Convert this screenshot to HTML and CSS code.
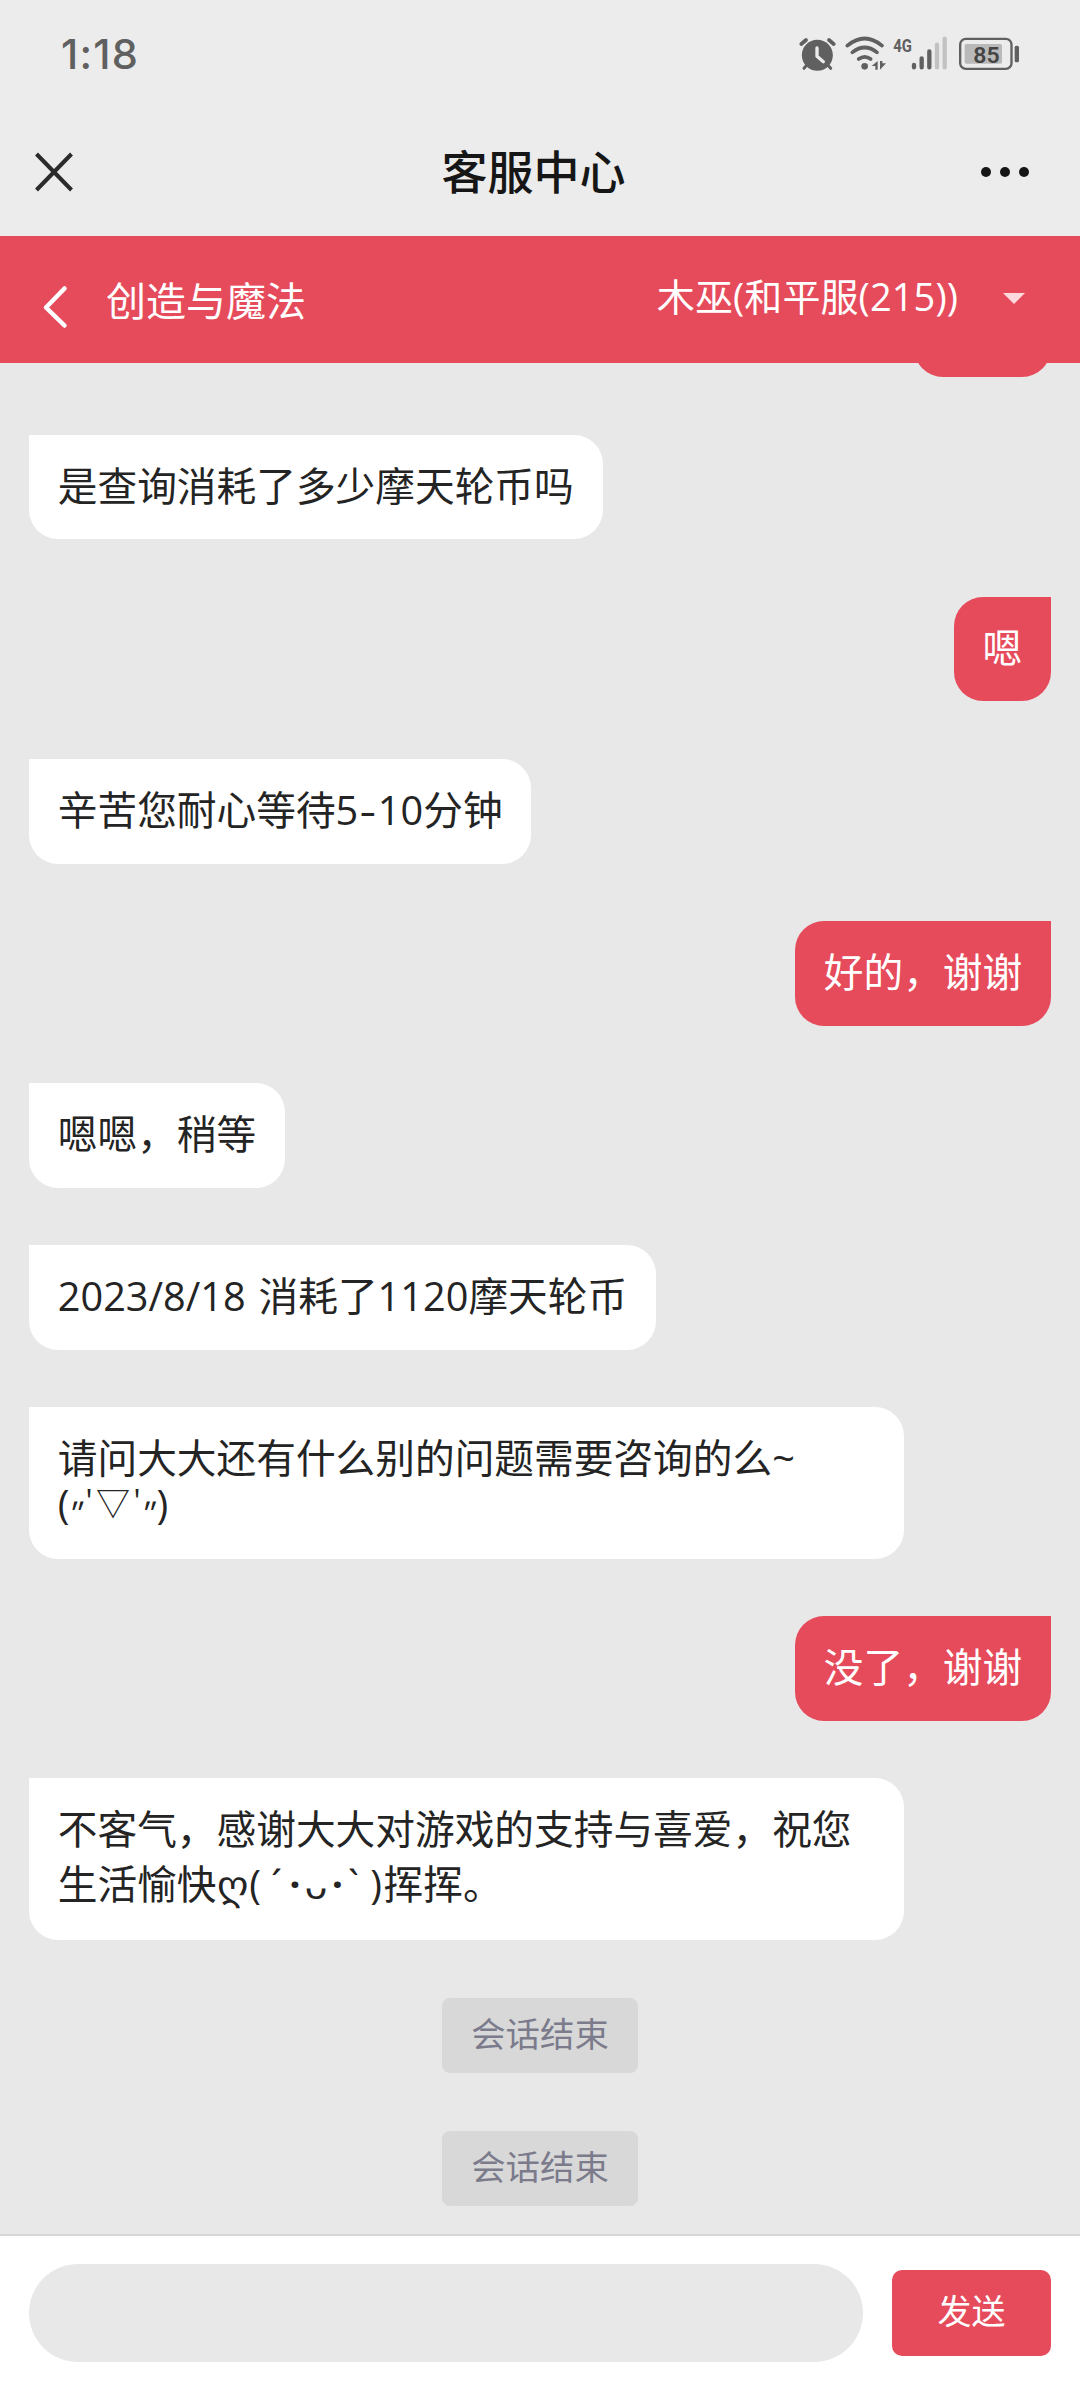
FILE: index.html
```html
<!DOCTYPE html>
<html lang="zh-CN">
<head>
<meta charset="UTF-8">
<meta name="viewport" content="width=device-width">
<title>客服中心</title>
<link rel="stylesheet" href="styles.css">
</head>
<body>
<div class="app">
  <div class="status">
    <span class="time">1:18</span>
    <div class="status-icons">
      <svg width="38" height="40" viewBox="57 40 114 120">
        <circle cx="112" cy="104" r="46.500" fill="#606060"/>
        <path d="M64 70l14-12M161 70l-14-12" stroke="#606060" stroke-width="11" stroke-linecap="round"/>
        <path d="M80 134l-8 9M144 134l8 9" stroke="#606060" stroke-width="9" stroke-linecap="round"/>
        <path d="M111 82v25l19 16" fill="none" stroke="#ececec" stroke-width="10" stroke-linecap="round" stroke-linejoin="round"/>
      </svg>
      <svg class="wifi" width="42" height="40" viewBox="195 40 126 120">
        <g fill="none" stroke="#606060" stroke-width="11" stroke-linecap="round">
          <path d="M202 75Q254 32 306 75"/>
          <path d="M217 95Q254 66 291 95"/>
          <path d="M236 115Q254 102 272 115"/>
        </g>
        <circle cx="254" cy="137" r="10" fill="#606060"/>
        <path d="M293 121v26h-7v-11h-11zM300 147v-26h7v7h11z" fill="#606060"/>
      </svg>
      <svg class="signal" width="54" height="40" viewBox="340 40 162 120">
        <text x="341" y="93" class="network" textLength="56" lengthAdjust="spacingAndGlyphs">4G</text>
        <g stroke-width="13" stroke-linecap="round" stroke="#606060">
          <path d="M403 133v7M426 113v27M449 92v48"/>
          <path d="M472 72v68M495 54v86" stroke="#c2c2c2"/>
        </g>
      </svg>
      <svg class="battery" width="61" height="40" viewBox="538 40 183 120">
        <rect x="541.500" y="54.500" width="154" height="90" rx="17" fill="none" stroke="#606060" stroke-width="7"/>
        <rect x="555" y="70" width="112" height="59" rx="5" fill="#b9b9b9"/>
        <rect x="705" y="75" width="13" height="50" rx="5" fill="#606060"/>
        <text x="581" y="127" class="charge" textLength="79" lengthAdjust="spacingAndGlyphs">85</text>
      </svg>
    </div>
  </div>
  <header class="titlebar">
    <svg class="close-page" width="42" height="42" viewBox="0 0 42 42"><path d="M3.500 3l35 36M38.500 3l-35 36" fill="none" stroke="#2b2b2b" stroke-width="4"/></svg>
    <h1>客服中心</h1>
    <div class="more"><i></i><i></i><i></i></div>
  </header>
  <nav class="gamebar">
    <svg class="back" width="26" height="44" viewBox="0 0 26 44"><path d="M22.500 3.500L4 22.500l18.500 18" fill="none" stroke="#fff" stroke-width="4.500" stroke-linecap="round" stroke-linejoin="round"/></svg>
    <span class="game">创造与魔法</span>
    <span class="role">木巫(和平服(215))</span>
    <span class="caret"></span>
  </nav>
  <main class="chat">
    <div class="bubble me scrolled"></div>
    <div class="bubble">是查询消耗了多少摩天轮币吗</div>
    <div class="bubble me">嗯</div>
    <div class="bubble">辛苦您耐心等待5<span class="dash">-</span>10分钟</div>
    <div class="bubble me">好的，谢谢</div>
    <div class="bubble">嗯嗯，稍等</div>
    <div class="bubble">2023/8/18 消耗了1120摩天轮币</div>
    <div class="bubble wide">请问大大还有什么别的问题需要咨询的么~<span class="face"><span class="kao">(</span><span class="kao quote">״</span><span class="kao tick">'</span><span class="kao tri">▽</span><span class="kao tick">'</span><span class="kao quote">״</span><span class="kao">)</span></span></div>
    <div class="bubble me">没了，谢谢</div>
    <div class="bubble wide">不客气，感谢大大对游戏的支持与喜爱，祝您<span class="tall">生活愉快<span class="kao geo">ღ</span><span class="kao open">(</span><span class="kao acute">´</span><span class="kao dot">·</span><span class="kao mouth">ᴗ</span><span class="kao dot">·</span><span class="kao grave">`</span><span class="kao close">)</span>挥挥。</span></div>
    <div class="notice">会话结束</div>
    <div class="notice">会话结束</div>
  </main>
  <footer class="composer">
    <div class="input"></div>
    <button class="send">发送</button>
  </footer>
</div>
</body>
</html>
```
FILE: styles.css
```css
* { box-sizing: border-box; }
body {
  margin: 0;
  background: #e8e8e8;
  color: #242424;
  font-family: "Open Sans", "Noto Sans CJK SC", sans-serif;
}
svg { display: block; flex: none; }
.app { width: 1080px; height: 2388px; display: flex; flex-direction: column; overflow: hidden; }

.status {
  height: 106px;
  flex: none;
  padding: 0 60px 0 61px;
  display: flex;
  justify-content: space-between;
  align-items: center;
  background: #ececec;
}
.time { font-family: Inter, sans-serif; font-size: 41.500px; font-weight: 450; line-height: 48px; color: #606060; margin-top: 2px; letter-spacing: 1.200px; }
.status-icons { display: flex; margin-top: 1px; }
.wifi { margin-left: 8px; }
.signal { margin-left: 6px; }
.battery { margin-left: 12px; }
.network { font: 700 55px "Roboto", sans-serif; fill: #606060; }
.charge { font: 600 68px "Roboto", sans-serif; fill: #444; }

.titlebar {
  height: 130px;
  flex: none;
  padding: 0 51px 0 33px;
  display: grid;
  grid-template-columns: 1fr auto 1fr;
  align-items: center;
  background: #ececec;
}
.close-page { margin-top: 2px; }
.titlebar h1 { margin: 0 0 4px 5px; font-size: 46px; line-height: 60px; font-weight: 500; color: #161616; font-family: "Noto Sans CJK SC", sans-serif; }
.more { display: flex; gap: 9px; justify-self: end; margin-top: 1px; }
.more i { width: 10px; height: 10px; border-radius: 50%; background: #161616; }

.gamebar {
  height: 127px;
  flex: none;
  padding: 0 55px 0 42px;
  display: flex;
  align-items: center;
  background: #e64b5c;
  color: #fff;
}
.back { margin-top: 14px; }
.game { margin-left: 38px; font-size: 40px; line-height: 50px; margin-top: 3px; }
.role { margin-left: auto; font-size: 38px; line-height: 50px; margin-top: -8px; letter-spacing: 0.100px; }
.caret { margin: -2px 0 0 45px; border: 11px solid transparent; border-top-color: #ffd9dd; border-bottom: 0; }

.chat {
  height: 1871px;
  flex: none;
  overflow: hidden;
  padding: 0 29px;
  display: flex;
  flex-direction: column;
  align-items: flex-start;
  gap: 57.700px;
}
.bubble {
  flex: none;
  padding: 27.700px 28.800px 29.900px;
  font-size: 39.700px;
  line-height: 46.800px;
  background: #fff;
  border-radius: 0 29px 29px 29px;
  white-space: nowrap;
  word-spacing: 2.500px;
}
.bubble.me { align-self: flex-end; background: #e64b5c; color: #fff; border-radius: 29px 0 29px 29px; }
.bubble.scrolled { width: 137px; height: 104px; margin-top: -89.700px; }
.bubble.wide { width: 875px; }
.dash { display: inline-block; width: 19.500px; text-align: center; transform: scaleX(1.3); }

/* Kaomoji: each mark sits in a cell of its own width */
.face { display: flex; height: 46.800px; line-height: 44px; }
.tall { display: block; height: 57.700px; line-height: 63px; }
.kao { display: inline-block; text-align: center; }
.quote { width: 14.500px; font-size: 28px; line-height: 62px; }
.tick { width: 10px; font-size: 32px; line-height: 38px; }
.tri { width: 38px; font-size: 34px; line-height: 42px; }
.geo { width: 29px; }
.open { width: 19px; }
.acute { width: 24px; }
.grave { width: 20px; }
.dot { width: 12.500px; font-weight: 700; }
.mouth { width: 30px; }
.close { width: 15px; margin-left: 5px; }

.notice {
  flex: none;
  align-self: center;
  width: 196px;
  height: 75px;
  border-radius: 8px;
  background: #d8d8d8;
  color: #7b7b8c;
  font-size: 34.400px;
  line-height: 71px;
  text-align: center;
}

.composer {
  flex: 1;
  padding: 0 29px;
  border-top: 2px solid #d6d6d6;
  background: #fff;
  display: flex;
  align-items: center;
  gap: 29px;
}
.input { flex: 1; height: 98px; border-radius: 49px; background: #e8e8e8; margin-top: 1px; }
.send { width: 159px; height: 86px; margin-top: 1px; padding: 0 0 4px; border: 0; border-radius: 10px; background: #e64b5c; color: #fff; font: 34px/50px "Open Sans", "Noto Sans CJK SC", sans-serif; }
```
